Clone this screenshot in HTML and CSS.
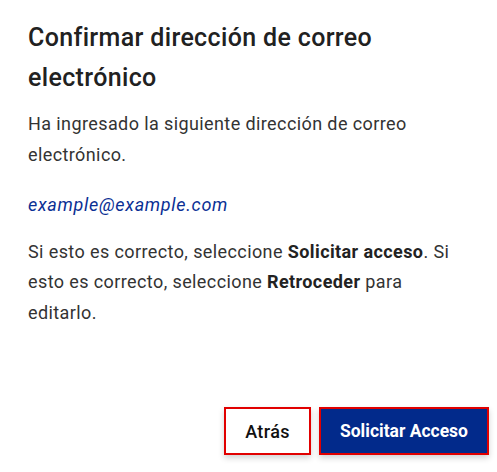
FILE: index.html
```html
<!DOCTYPE html>
<html lang="es">
<head>
    <meta charset="UTF-8">
    <meta name="viewport" content="width=device-width, initial-scale=1.0">
    <title>Confirmar dirección de correo electrónico</title>
    <link rel="stylesheet" href="styles.css">
</head>
<body>

    <div class="dialog">
        <!-- Dialog content -->
        <div class="dialog-body">
            <h2>Confirmar dirección de correo electrónico</h2>
            <p>Ha ingresado la siguiente dirección de correo electrónico.</p>
            <p class="email">example@example.com</p>
            <p>Si esto es correcto, seleccione <b>Solicitar acceso</b>. Si esto es correcto, seleccione <b>Retroceder</b> para editarlo.</p>
        </div>

        <!-- Dialog actions -->
        <div class="actions">
            <button class="btn btn-back">Atrás</button>
            <button class="btn btn-primary">Solicitar Acceso</button>
        </div>
    </div>

</body>
</html>
```

FILE: styles.css
```css
* {
  margin: 0;
  padding: 0;
  box-sizing: inherit;
}
html {
  box-sizing: border-box;
}

body {
  background-color: white;
  height: 100vh;
  font-family: Roboto, "Liberation Sans", sans-serif;
  color: #333;
}

.dialog {
  display: flex;
  flex-direction: column;
  height: 100%;
  padding: 0 8px 17px 0;
}

.dialog-body {
  padding: 18px 20px 0 28px;
}

h2 {
  color: #212121;
  font-size: 25px;
  font-weight: 500;
  line-height: 40px;
  letter-spacing: 0.35px;
  margin-bottom: 11px;
}

p {
  font-size: 18px;
  line-height: 30.6px;
  letter-spacing: 0.4px;
  margin-bottom: 20px;
}

.email {
  color: #0a2f94;
  font-style: italic;
  letter-spacing: 0.7px;
  margin-bottom: 16px;
}

b {
  font-weight: 700;
  color: #222;
}

.actions {
  display: flex;
  justify-content: flex-end;
  gap: 8px;
  margin-top: auto;
}

.btn {
  all: unset;
  height: 48px;
  padding: 0 19px;
  font-family: Roboto, "Liberation Sans", sans-serif;
  font-size: 18px;
  font-weight: 500;
  border: 2px solid #e10000;
  box-sizing: border-box;
  box-shadow: 0 3px 6px rgba(0, 0, 0, 0.18);
  cursor: pointer;
  display: flex;
  align-items: center;
}

.btn-back {
  background-color: white;
  color: #111;
  letter-spacing: 0.4px;
}

.btn-primary {
  background-color: #022a8b;
  color: white;
  font-size: 17.5px;
  font-weight: 700;
}
```
